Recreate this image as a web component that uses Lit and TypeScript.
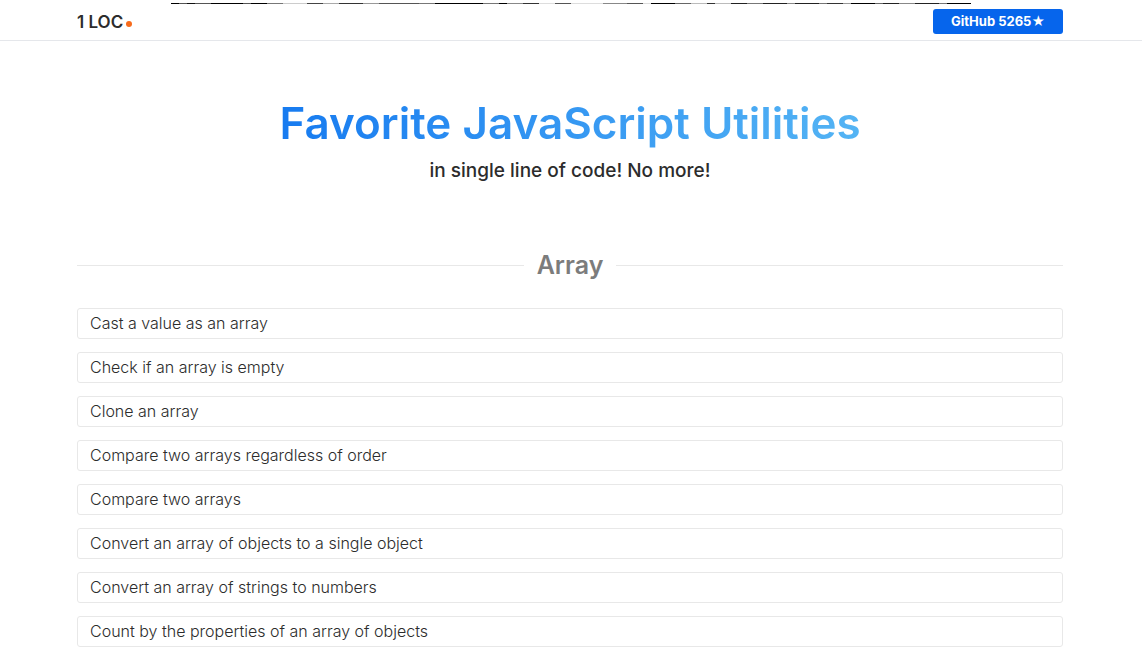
import { LitElement, html, css } from "lit";
import { customElement, state } from "lit/decorators.js";

const UTILITIES = [
  "Cast a value as an array",
  "Check if an array is empty",
  "Clone an array",
  "Compare two arrays regardless of order",
  "Compare two arrays",
  "Convert an array of objects to a single object",
  "Convert an array of strings to numbers",
  "Count by the properties of an array of objects",
];

@customElement("app-root")
export class AppRoot extends LitElement {
  @state() private stars = 5265;

  static styles = css`
    :host {
      display: block;
      font-family: Inter, sans-serif;
      font-size: 16px;
      line-height: 24px;
      color: #2c2c2c;
      background: #fff;
      position: relative;
    }
    * { box-sizing: border-box; }
    .strip {
      position: absolute;
      top: 3px;
      left: 15%;
      right: 15%;
      height: 1px;
      background: linear-gradient(to right,
        #000 0 1%, #555 1% 2%, #111 2% 3%, #555 3% 5%, #000 5% 9%, #555 9% 10%, #000 10% 12%,
        #777 12% 14%, #ccc 14% 17%, #444 17% 19%, #aaa 19% 21%, #333 21% 24%, #999 24% 26%,
        #555 26% 31%, #777 31% 33%, #000 33% 39%, #777 39% 41%, #000 41% 42%, #888 42% 44%,
        #333 44% 46%, #ddd 46% 48%, #555 48% 50%, #ddd 50% 54%, #888 54% 57%, #555 57% 59%,
        #ddd 59% 60%, #000 60% 63%, #666 63% 65%, #bbb 65% 67%, #333 67% 68%, #bbb 68% 70%,
        #222 70% 72%, #777 72% 74%, #222 74% 77%, #888 77% 78%, #222 78% 81%, #777 81% 82%,
        #333 82% 84%, #999 84% 85%, #000 85% 88%, #666 88% 89%, #222 89% 91%, #888 91% 93%,
        #222 93% 96%, #777 96% 97%, #000 97% 100%);
    }
    .header { border-bottom: 1px solid #e5e7eb; }
    .wrap { padding: 0 79px 0 77px; }
    .bar {
      display: flex;
      align-items: center;
      justify-content: space-between;
      height: 40px;
      padding-top: 3px;
    }
    .logo {
      display: flex;
      align-items: center;
      gap: 3px;
      color: inherit;
      text-decoration: none;
      font-size: 17px;
      font-weight: 600;
    }
    .dot { width: 6px; height: 6px; margin-top: 4px; border-radius: 50%; background: #f76b1c; }
    .github {
      width: 130px;
      border-radius: 3px;
      background: #0665ec;
      color: #fff;
      font-size: 13px;
      font-weight: 700;
      line-height: 25px;
      text-align: center;
      text-decoration: none;
    }
    .hero { padding: 54px 0 0; text-align: center; }
    h1, h2, p, ul { margin: 0; padding: 0; }
    h1 { line-height: 56px; font-size: 44px; font-weight: 600; }
    .gradient {
      background: linear-gradient(to right, #177bf0, #54b4f4);
      -webkit-background-clip: text;
      background-clip: text;
      color: transparent;
    }
    .tagline { margin-top: 6px; font-size: 19px; line-height: 28px; font-weight: 500; }
    .title {
      display: flex;
      align-items: center;
      gap: 13px;
      margin: 64px 0 27px;
      font-size: 25px;
      line-height: 32px;
      font-weight: 600;
      color: #7c7c7c;
    }
    .title::before, .title::after { content: ""; flex: 1; height: 1px; background: #e8e8e8; }
    ul { list-style: none; display: grid; gap: 13px; }
    .item {
      display: block;
      padding: 3px 12px;
      border: 1px solid #e8e8e8;
      border-radius: 3px;
      color: inherit;
      font-weight: 300;
      line-height: 23px;
      text-decoration: none;
    }
  `;

  render() {
    return html`
      <div class="strip"></div>
      <header class="header wrap">
        <div class="bar">
          <a class="logo" href="#">1 LOC<span class="dot"></span></a>
          <a class="github" href="#github">GitHub ${this.stars}★</a>
        </div>
      </header>
      <main class="wrap">
        <section class="hero">
          <h1><span class="gradient">Favorite JavaScript Utilities</span></h1>
          <p class="tagline">in single line of code! No more!</p>
        </section>
        <h2 class="title">Array</h2>
        <ul>
          ${UTILITIES.map((name) => html`<li><a class="item" href="#array">${name}</a></li>`)}
        </ul>
      </main>
    `;
  }
}
